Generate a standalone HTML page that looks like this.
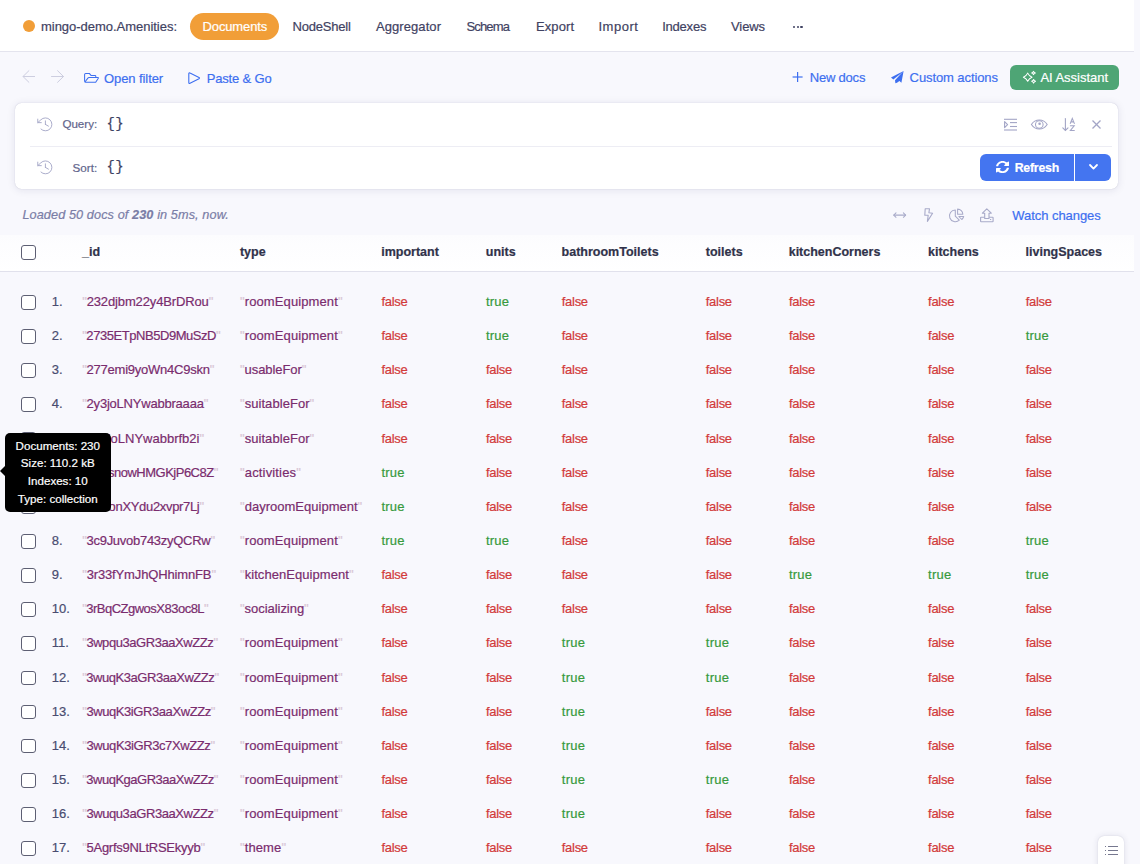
<!DOCTYPE html><html><head><meta charset="utf-8"><style>
*{box-sizing:border-box}
html,body{margin:0;padding:0}
body{width:1140px;height:864px;overflow:hidden;background:#f8f8fd;position:relative;font-family:"Liberation Sans",sans-serif}
.t{position:absolute;line-height:20px;white-space:nowrap;-webkit-text-stroke:0.2px currentColor}
.a{position:absolute}
svg{position:absolute;overflow:visible}
</style></head><body>
<div class="a" style="left:0;top:0;width:1134px;height:52px;background:#fff;border-bottom:1px solid #e4e4ee"></div>
<div class="a" style="left:22.7px;top:20px;width:12px;height:12px;border-radius:50%;background:#f19e38"></div>
<div class="t" style="left:41.00px;top:17px;font-size:13px;color:#3f4262;font-weight:normal;font-style:normal;letter-spacing:-0.028px;">mingo-demo.Amenities:</div>
<div class="a" style="left:190px;top:13px;width:89px;height:27px;border-radius:14px;background:#f19e38"></div>
<div class="t" style="left:202.60px;top:17px;font-size:13px;color:#fff;font-weight:normal;font-style:normal;letter-spacing:-0.144px;">Documents</div>
<div class="t" style="left:292.50px;top:17px;font-size:13px;color:#3f4262;font-weight:normal;font-style:normal;letter-spacing:-0.211px;">NodeShell</div>
<div class="t" style="left:376.00px;top:17px;font-size:13px;color:#3f4262;font-weight:normal;font-style:normal;letter-spacing:0.075px;">Aggregator</div>
<div class="t" style="left:466.40px;top:17px;font-size:13px;color:#3f4262;font-weight:normal;font-style:normal;letter-spacing:-0.818px;">Schema</div>
<div class="t" style="left:536.00px;top:17px;font-size:13px;color:#3f4262;font-weight:normal;font-style:normal;letter-spacing:0.085px;">Export</div>
<div class="t" style="left:598.40px;top:17px;font-size:13px;color:#3f4262;font-weight:normal;font-style:normal;letter-spacing:0.531px;">Import</div>
<div class="t" style="left:662.20px;top:17px;font-size:13px;color:#3f4262;font-weight:normal;font-style:normal;letter-spacing:-0.222px;">Indexes</div>
<div class="t" style="left:731.00px;top:17px;font-size:13px;color:#3f4262;font-weight:normal;font-style:normal;letter-spacing:-0.086px;">Views</div>
<div class="a" style="left:793.0px;top:25.6px;width:2.2px;height:2.2px;border-radius:50%;background:#3f4262"></div>
<div class="a" style="left:796.7px;top:25.6px;width:2.2px;height:2.2px;border-radius:50%;background:#3f4262"></div>
<div class="a" style="left:800.4px;top:25.6px;width:2.2px;height:2.2px;border-radius:50%;background:#3f4262"></div>
<div class="t" style="left:104.00px;top:69px;font-size:13px;color:#3d6ff0;font-weight:normal;font-style:normal;letter-spacing:-0.077px;">Open filter</div>
<div class="t" style="left:206.70px;top:69px;font-size:13px;color:#3d6ff0;font-weight:normal;font-style:normal;letter-spacing:-0.164px;">Paste &amp; Go</div>
<div class="t" style="left:809.80px;top:68px;font-size:13px;color:#3d6ff0;font-weight:normal;font-style:normal;letter-spacing:-0.211px;">New docs</div>
<div class="t" style="left:909.60px;top:68px;font-size:13px;color:#3d6ff0;font-weight:normal;font-style:normal;letter-spacing:-0.092px;">Custom actions</div>
<div class="a" style="left:1010.3px;top:65.2px;width:109px;height:24.6px;border-radius:6px;background:#4ea575"></div>
<div class="t" style="left:1040.40px;top:68px;font-size:13px;color:#fff;font-weight:normal;font-style:normal;letter-spacing:-0.029px;">AI Assistant</div>
<div class="a" style="left:14.8px;top:103.4px;width:1103.6px;height:85.2px;border-radius:6.5px;background:#fff;box-shadow:0 0 1px rgba(30,30,90,0.25),0 1px 8px rgba(30,30,90,0.10)"></div>
<div class="a" style="left:30px;top:145.7px;width:1082px;height:1px;background:#ededf4"></div>
<svg style="left:35.7px;top:114.8px" width="18.8" height="18.8" viewBox="0 0 256 256"><g fill="none" stroke="#a3a5c6" stroke-width="12.5" stroke-linecap="round" stroke-linejoin="round"><line x1="128" y1="80" x2="128" y2="128"/><line x1="169.6" y1="152" x2="128" y2="128"/><polyline points="72 104 24 104 24 56"/><path d="M67.6,192a88,88,0,1,0-1.8-126.2L24,104"/></g></svg>
<svg style="left:35.7px;top:157.8px" width="18.8" height="18.8" viewBox="0 0 256 256"><g fill="none" stroke="#a3a5c6" stroke-width="12.5" stroke-linecap="round" stroke-linejoin="round"><line x1="128" y1="80" x2="128" y2="128"/><line x1="169.6" y1="152" x2="128" y2="128"/><polyline points="72 104 24 104 24 56"/><path d="M67.6,192a88,88,0,1,0-1.8-126.2L24,104"/></g></svg>
<div class="t" style="left:62.40px;top:114px;font-size:11.6px;color:#62658c;font-weight:normal;font-style:normal;">Query:</div>
<div class="t" style="left:72.60px;top:158px;font-size:11.65px;color:#62658c;font-weight:normal;font-style:normal;">Sort:</div>
<div class="t" style="left:106.60px;top:114px;font-size:14px;color:#3c3f62;font-weight:normal;font-style:normal;font-family:Liberation Mono,monospace;letter-spacing:0.3px">{}</div>
<div class="t" style="left:106.60px;top:157px;font-size:14px;color:#3c3f62;font-weight:normal;font-style:normal;font-family:Liberation Mono,monospace;letter-spacing:0.3px">{}</div>
<svg style="left:1004px;top:118px" width="13" height="13" viewBox="0 0 13 13"><g stroke="#a3a5c6" stroke-width="1.1" fill="none"><line x1="0" y1="1.3" x2="13" y2="1.3"/><line x1="6" y1="4.6" x2="13" y2="4.6"/><line x1="6" y1="8.5" x2="13" y2="8.5"/><line x1="0" y1="12" x2="13" y2="12"/><path d="M0.6,3.6 L3.6,6.6 L0.6,9.6Z" stroke-linejoin="round"/></g></svg>
<svg style="left:1062px;top:118px" width="14" height="13" viewBox="0 0 14 13"><g stroke="#a3a5c6" stroke-width="1.1" fill="none" stroke-linecap="round"><line x1="3.4" y1="0.5" x2="3.4" y2="12.3"/><polyline points="0.8,9.8 3.4,12.4 6,9.8"/><path d="M8.3,5.4 L10.3,0.4 L12.3,5.4 M9,3.9 L11.6,3.9"/><path d="M8.4,7.8 L12.2,7.8 L8.4,12.5 L12.3,12.5"/></g></svg>
<svg style="left:1092.1px;top:120px" width="9" height="9" viewBox="0 0 9 9"><g stroke="#a3a5c6" stroke-width="1.2"><line x1="0.5" y1="0.5" x2="8.5" y2="8.5"/><line x1="8.5" y1="0.5" x2="0.5" y2="8.5"/></g></svg>
<div class="a" style="left:980px;top:154px;width:131px;height:27.3px;border-radius:6px;background:#4475f0"></div>
<div class="a" style="left:1074px;top:154px;width:1px;height:27.3px;background:#fff"></div>
<div class="t" style="left:1014.70px;top:158px;font-size:12.3px;color:#fff;font-weight:bold;font-style:normal;letter-spacing:-0.217px;">Refresh</div>
<svg style="left:1088.8px;top:164px" width="9" height="6" viewBox="0 0 9 6"><polyline points="1,1 4.5,4.6 8,1" fill="none" stroke="#fff" stroke-width="1.8" stroke-linecap="round" stroke-linejoin="round"/></svg>
<div class="t" style="left:22.40px;top:205px;font-size:12.7px;color:#7a7da6;font-weight:normal;font-style:italic;letter-spacing:0.096px;">Loaded 50 docs of <b>230</b> in 5ms, now.</div>
<svg style="left:924px;top:208px" width="10" height="14" viewBox="0 0 10 14"><path d="M1.2,0.7 L5.5,0.7 L4.9,4.8 L8.6,5.3 L3.4,13.4 L4.2,7.3 L0.8,7.2 Z" fill="none" stroke="#a8aac9" stroke-width="1.1" stroke-linejoin="round"/></svg>
<svg style="left:979.5px;top:208px" width="14" height="14.5" viewBox="0 0 14 14.5"><g fill="none" stroke="#a8aac9" stroke-width="1.1" stroke-linejoin="round"><path d="M6.8,0.8 L11.3,5.2 L9,5.2 L9,10.5 L4.7,10.5 L4.7,5.2 L2.4,5.2 Z"/><path d="M4.6,9.2 L1.2,9.2 Q0.6,9.2 0.6,9.8 L0.6,13.2 Q0.6,13.8 1.2,13.8 L12.5,13.8 Q13.1,13.8 13.1,13.2 L13.1,9.8 Q13.1,9.2 12.5,9.2 L9.1,9.2"/><line x1="10" y1="11.5" x2="11.2" y2="11.5"/></g></svg>
<div class="t" style="left:1012.30px;top:206px;font-size:13px;color:#3d6ff0;font-weight:normal;font-style:normal;letter-spacing:-0.052px;">Watch changes</div>
<div class="a" style="left:0;top:235px;width:1134px;height:37px;background:linear-gradient(#fcfcfe,#fff);border-bottom:1px solid #e1e1ec"></div>
<div class="a" style="left:21.30px;top:245.00px;width:14.6px;height:14.6px;border:1.3px solid #5d5f73;border-radius:3px;background:#fff"></div>
<div class="t" style="left:82.00px;top:242px;font-size:12.5px;color:#30324a;font-weight:bold;font-style:normal;">_id</div>
<div class="t" style="left:239.90px;top:242px;font-size:12.5px;color:#30324a;font-weight:bold;font-style:normal;">type</div>
<div class="t" style="left:381.20px;top:242px;font-size:12.5px;color:#30324a;font-weight:bold;font-style:normal;">important</div>
<div class="t" style="left:485.80px;top:242px;font-size:12.5px;color:#30324a;font-weight:bold;font-style:normal;">units</div>
<div class="t" style="left:561.60px;top:242px;font-size:12.5px;color:#30324a;font-weight:bold;font-style:normal;">bathroomToilets</div>
<div class="t" style="left:705.80px;top:242px;font-size:12.5px;color:#30324a;font-weight:bold;font-style:normal;">toilets</div>
<div class="t" style="left:788.70px;top:242px;font-size:12.5px;color:#30324a;font-weight:bold;font-style:normal;">kitchenCorners</div>
<div class="t" style="left:928.00px;top:242px;font-size:12.5px;color:#30324a;font-weight:bold;font-style:normal;">kitchens</div>
<div class="t" style="left:1025.60px;top:242px;font-size:12.5px;color:#30324a;font-weight:bold;font-style:normal;">livingSpaces</div>
<div class="a" style="left:21.30px;top:295.00px;width:14.6px;height:14.6px;border:1.3px solid #5d5f73;border-radius:3px;background:#fff"></div>
<div class="t" style="left:51.80px;top:292px;font-size:13px;color:#494c70;font-weight:normal;font-style:normal;">1.</div>
<div class="t" style="left:82.20px;top:292px;font-size:13px;color:#7a2c6e;font-weight:normal;font-style:normal;letter-spacing:-0.135px;"><span style="color:#d8c6d6">"</span>232djbm22y4BrDRou<span style="color:#d8c6d6">"</span></div>
<div class="t" style="left:240.00px;top:292px;font-size:13px;color:#7a2c6e;font-weight:normal;font-style:normal;letter-spacing:0.107px;"><span style="color:#d8c6d6">"</span>roomEquipment<span style="color:#d8c6d6">"</span></div>
<div class="t" style="left:381.40px;top:292px;font-size:13px;color:#d23a3a;font-weight:normal;font-style:normal;letter-spacing:-0.290px;">false</div>
<div class="t" style="left:485.90px;top:292px;font-size:13px;color:#379a3d;font-weight:normal;font-style:normal;letter-spacing:0.233px;">true</div>
<div class="t" style="left:561.80px;top:292px;font-size:13px;color:#d23a3a;font-weight:normal;font-style:normal;letter-spacing:-0.290px;">false</div>
<div class="t" style="left:705.80px;top:292px;font-size:13px;color:#d23a3a;font-weight:normal;font-style:normal;letter-spacing:-0.290px;">false</div>
<div class="t" style="left:788.90px;top:292px;font-size:13px;color:#d23a3a;font-weight:normal;font-style:normal;letter-spacing:-0.290px;">false</div>
<div class="t" style="left:928.10px;top:292px;font-size:13px;color:#d23a3a;font-weight:normal;font-style:normal;letter-spacing:-0.290px;">false</div>
<div class="t" style="left:1025.70px;top:292px;font-size:13px;color:#d23a3a;font-weight:normal;font-style:normal;letter-spacing:-0.290px;">false</div>
<div class="a" style="left:21.30px;top:329.14px;width:14.6px;height:14.6px;border:1.3px solid #5d5f73;border-radius:3px;background:#fff"></div>
<div class="t" style="left:51.80px;top:326px;font-size:13px;color:#494c70;font-weight:normal;font-style:normal;">2.</div>
<div class="t" style="left:82.20px;top:326px;font-size:13px;color:#7a2c6e;font-weight:normal;font-style:normal;letter-spacing:-0.446px;"><span style="color:#d8c6d6">"</span>2735ETpNB5D9MuSzD<span style="color:#d8c6d6">"</span></div>
<div class="t" style="left:240.00px;top:326px;font-size:13px;color:#7a2c6e;font-weight:normal;font-style:normal;letter-spacing:0.107px;"><span style="color:#d8c6d6">"</span>roomEquipment<span style="color:#d8c6d6">"</span></div>
<div class="t" style="left:381.40px;top:326px;font-size:13px;color:#d23a3a;font-weight:normal;font-style:normal;letter-spacing:-0.290px;">false</div>
<div class="t" style="left:485.90px;top:326px;font-size:13px;color:#379a3d;font-weight:normal;font-style:normal;letter-spacing:0.233px;">true</div>
<div class="t" style="left:561.80px;top:326px;font-size:13px;color:#d23a3a;font-weight:normal;font-style:normal;letter-spacing:-0.290px;">false</div>
<div class="t" style="left:705.80px;top:326px;font-size:13px;color:#d23a3a;font-weight:normal;font-style:normal;letter-spacing:-0.290px;">false</div>
<div class="t" style="left:788.90px;top:326px;font-size:13px;color:#d23a3a;font-weight:normal;font-style:normal;letter-spacing:-0.290px;">false</div>
<div class="t" style="left:928.10px;top:326px;font-size:13px;color:#d23a3a;font-weight:normal;font-style:normal;letter-spacing:-0.290px;">false</div>
<div class="t" style="left:1025.70px;top:326px;font-size:13px;color:#379a3d;font-weight:normal;font-style:normal;letter-spacing:0.233px;">true</div>
<div class="a" style="left:21.30px;top:363.28px;width:14.6px;height:14.6px;border:1.3px solid #5d5f73;border-radius:3px;background:#fff"></div>
<div class="t" style="left:51.80px;top:360px;font-size:13px;color:#494c70;font-weight:normal;font-style:normal;">3.</div>
<div class="t" style="left:82.20px;top:360px;font-size:13px;color:#7a2c6e;font-weight:normal;font-style:normal;letter-spacing:-0.239px;"><span style="color:#d8c6d6">"</span>277emi9yoWn4C9skn<span style="color:#d8c6d6">"</span></div>
<div class="t" style="left:240.00px;top:360px;font-size:13px;color:#7a2c6e;font-weight:normal;font-style:normal;letter-spacing:-0.074px;"><span style="color:#d8c6d6">"</span>usableFor<span style="color:#d8c6d6">"</span></div>
<div class="t" style="left:381.40px;top:360px;font-size:13px;color:#d23a3a;font-weight:normal;font-style:normal;letter-spacing:-0.290px;">false</div>
<div class="t" style="left:485.90px;top:360px;font-size:13px;color:#d23a3a;font-weight:normal;font-style:normal;letter-spacing:-0.290px;">false</div>
<div class="t" style="left:561.80px;top:360px;font-size:13px;color:#d23a3a;font-weight:normal;font-style:normal;letter-spacing:-0.290px;">false</div>
<div class="t" style="left:705.80px;top:360px;font-size:13px;color:#d23a3a;font-weight:normal;font-style:normal;letter-spacing:-0.290px;">false</div>
<div class="t" style="left:788.90px;top:360px;font-size:13px;color:#d23a3a;font-weight:normal;font-style:normal;letter-spacing:-0.290px;">false</div>
<div class="t" style="left:928.10px;top:360px;font-size:13px;color:#d23a3a;font-weight:normal;font-style:normal;letter-spacing:-0.290px;">false</div>
<div class="t" style="left:1025.70px;top:360px;font-size:13px;color:#d23a3a;font-weight:normal;font-style:normal;letter-spacing:-0.290px;">false</div>
<div class="a" style="left:21.30px;top:397.42px;width:14.6px;height:14.6px;border:1.3px solid #5d5f73;border-radius:3px;background:#fff"></div>
<div class="t" style="left:51.80px;top:394px;font-size:13px;color:#494c70;font-weight:normal;font-style:normal;">4.</div>
<div class="t" style="left:82.20px;top:394px;font-size:13px;color:#7a2c6e;font-weight:normal;font-style:normal;letter-spacing:-0.213px;"><span style="color:#d8c6d6">"</span>2y3joLNYwabbraaaa<span style="color:#d8c6d6">"</span></div>
<div class="t" style="left:240.00px;top:394px;font-size:13px;color:#7a2c6e;font-weight:normal;font-style:normal;letter-spacing:0.055px;"><span style="color:#d8c6d6">"</span>suitableFor<span style="color:#d8c6d6">"</span></div>
<div class="t" style="left:381.40px;top:394px;font-size:13px;color:#d23a3a;font-weight:normal;font-style:normal;letter-spacing:-0.290px;">false</div>
<div class="t" style="left:485.90px;top:394px;font-size:13px;color:#d23a3a;font-weight:normal;font-style:normal;letter-spacing:-0.290px;">false</div>
<div class="t" style="left:561.80px;top:394px;font-size:13px;color:#d23a3a;font-weight:normal;font-style:normal;letter-spacing:-0.290px;">false</div>
<div class="t" style="left:705.80px;top:394px;font-size:13px;color:#d23a3a;font-weight:normal;font-style:normal;letter-spacing:-0.290px;">false</div>
<div class="t" style="left:788.90px;top:394px;font-size:13px;color:#d23a3a;font-weight:normal;font-style:normal;letter-spacing:-0.290px;">false</div>
<div class="t" style="left:928.10px;top:394px;font-size:13px;color:#d23a3a;font-weight:normal;font-style:normal;letter-spacing:-0.290px;">false</div>
<div class="t" style="left:1025.70px;top:394px;font-size:13px;color:#d23a3a;font-weight:normal;font-style:normal;letter-spacing:-0.290px;">false</div>
<div class="a" style="left:21.30px;top:431.56px;width:14.6px;height:14.6px;border:1.3px solid #5d5f73;border-radius:3px;background:#fff"></div>
<div class="t" style="left:51.80px;top:429px;font-size:13px;color:#494c70;font-weight:normal;font-style:normal;">5.</div>
<div class="t" style="left:82.20px;top:429px;font-size:13px;color:#7a2c6e;font-weight:normal;font-style:normal;letter-spacing:-0.009px;"><span style="color:#d8c6d6">"</span>2y3joLNYwabbrfb2i<span style="color:#d8c6d6">"</span></div>
<div class="t" style="left:240.00px;top:429px;font-size:13px;color:#7a2c6e;font-weight:normal;font-style:normal;letter-spacing:0.055px;"><span style="color:#d8c6d6">"</span>suitableFor<span style="color:#d8c6d6">"</span></div>
<div class="t" style="left:381.40px;top:429px;font-size:13px;color:#d23a3a;font-weight:normal;font-style:normal;letter-spacing:-0.290px;">false</div>
<div class="t" style="left:485.90px;top:429px;font-size:13px;color:#d23a3a;font-weight:normal;font-style:normal;letter-spacing:-0.290px;">false</div>
<div class="t" style="left:561.80px;top:429px;font-size:13px;color:#d23a3a;font-weight:normal;font-style:normal;letter-spacing:-0.290px;">false</div>
<div class="t" style="left:705.80px;top:429px;font-size:13px;color:#d23a3a;font-weight:normal;font-style:normal;letter-spacing:-0.290px;">false</div>
<div class="t" style="left:788.90px;top:429px;font-size:13px;color:#d23a3a;font-weight:normal;font-style:normal;letter-spacing:-0.290px;">false</div>
<div class="t" style="left:928.10px;top:429px;font-size:13px;color:#d23a3a;font-weight:normal;font-style:normal;letter-spacing:-0.290px;">false</div>
<div class="t" style="left:1025.70px;top:429px;font-size:13px;color:#d23a3a;font-weight:normal;font-style:normal;letter-spacing:-0.290px;">false</div>
<div class="a" style="left:21.30px;top:465.70px;width:14.6px;height:14.6px;border:1.3px solid #5d5f73;border-radius:3px;background:#fff"></div>
<div class="t" style="left:51.80px;top:463px;font-size:13px;color:#494c70;font-weight:normal;font-style:normal;">6.</div>
<div class="t" style="left:82.20px;top:463px;font-size:13px;color:#7a2c6e;font-weight:normal;font-style:normal;letter-spacing:-0.498px;"><span style="color:#d8c6d6">"</span>33BsnowHMGKjP6C8Z<span style="color:#d8c6d6">"</span></div>
<div class="t" style="left:240.00px;top:463px;font-size:13px;color:#7a2c6e;font-weight:normal;font-style:normal;letter-spacing:0.156px;"><span style="color:#d8c6d6">"</span>activities<span style="color:#d8c6d6">"</span></div>
<div class="t" style="left:381.40px;top:463px;font-size:13px;color:#379a3d;font-weight:normal;font-style:normal;letter-spacing:0.233px;">true</div>
<div class="t" style="left:485.90px;top:463px;font-size:13px;color:#d23a3a;font-weight:normal;font-style:normal;letter-spacing:-0.290px;">false</div>
<div class="t" style="left:561.80px;top:463px;font-size:13px;color:#d23a3a;font-weight:normal;font-style:normal;letter-spacing:-0.290px;">false</div>
<div class="t" style="left:705.80px;top:463px;font-size:13px;color:#d23a3a;font-weight:normal;font-style:normal;letter-spacing:-0.290px;">false</div>
<div class="t" style="left:788.90px;top:463px;font-size:13px;color:#d23a3a;font-weight:normal;font-style:normal;letter-spacing:-0.290px;">false</div>
<div class="t" style="left:928.10px;top:463px;font-size:13px;color:#d23a3a;font-weight:normal;font-style:normal;letter-spacing:-0.290px;">false</div>
<div class="t" style="left:1025.70px;top:463px;font-size:13px;color:#d23a3a;font-weight:normal;font-style:normal;letter-spacing:-0.290px;">false</div>
<div class="a" style="left:21.30px;top:499.84px;width:14.6px;height:14.6px;border:1.3px solid #5d5f73;border-radius:3px;background:#fff"></div>
<div class="t" style="left:51.80px;top:497px;font-size:13px;color:#494c70;font-weight:normal;font-style:normal;">7.</div>
<div class="t" style="left:82.20px;top:497px;font-size:13px;color:#7a2c6e;font-weight:normal;font-style:normal;letter-spacing:-0.331px;"><span style="color:#d8c6d6">"</span>3EaonXYdu2xvpr7Lj<span style="color:#d8c6d6">"</span></div>
<div class="t" style="left:240.00px;top:497px;font-size:13px;color:#7a2c6e;font-weight:normal;font-style:normal;letter-spacing:0.014px;"><span style="color:#d8c6d6">"</span>dayroomEquipment<span style="color:#d8c6d6">"</span></div>
<div class="t" style="left:381.40px;top:497px;font-size:13px;color:#379a3d;font-weight:normal;font-style:normal;letter-spacing:0.233px;">true</div>
<div class="t" style="left:485.90px;top:497px;font-size:13px;color:#d23a3a;font-weight:normal;font-style:normal;letter-spacing:-0.290px;">false</div>
<div class="t" style="left:561.80px;top:497px;font-size:13px;color:#d23a3a;font-weight:normal;font-style:normal;letter-spacing:-0.290px;">false</div>
<div class="t" style="left:705.80px;top:497px;font-size:13px;color:#d23a3a;font-weight:normal;font-style:normal;letter-spacing:-0.290px;">false</div>
<div class="t" style="left:788.90px;top:497px;font-size:13px;color:#d23a3a;font-weight:normal;font-style:normal;letter-spacing:-0.290px;">false</div>
<div class="t" style="left:928.10px;top:497px;font-size:13px;color:#d23a3a;font-weight:normal;font-style:normal;letter-spacing:-0.290px;">false</div>
<div class="t" style="left:1025.70px;top:497px;font-size:13px;color:#d23a3a;font-weight:normal;font-style:normal;letter-spacing:-0.290px;">false</div>
<div class="a" style="left:21.30px;top:533.98px;width:14.6px;height:14.6px;border:1.3px solid #5d5f73;border-radius:3px;background:#fff"></div>
<div class="t" style="left:51.80px;top:531px;font-size:13px;color:#494c70;font-weight:normal;font-style:normal;">8.</div>
<div class="t" style="left:82.20px;top:531px;font-size:13px;color:#7a2c6e;font-weight:normal;font-style:normal;letter-spacing:-0.280px;"><span style="color:#d8c6d6">"</span>3c9Juvob743zyQCRw<span style="color:#d8c6d6">"</span></div>
<div class="t" style="left:240.00px;top:531px;font-size:13px;color:#7a2c6e;font-weight:normal;font-style:normal;letter-spacing:0.107px;"><span style="color:#d8c6d6">"</span>roomEquipment<span style="color:#d8c6d6">"</span></div>
<div class="t" style="left:381.40px;top:531px;font-size:13px;color:#379a3d;font-weight:normal;font-style:normal;letter-spacing:0.233px;">true</div>
<div class="t" style="left:485.90px;top:531px;font-size:13px;color:#379a3d;font-weight:normal;font-style:normal;letter-spacing:0.233px;">true</div>
<div class="t" style="left:561.80px;top:531px;font-size:13px;color:#d23a3a;font-weight:normal;font-style:normal;letter-spacing:-0.290px;">false</div>
<div class="t" style="left:705.80px;top:531px;font-size:13px;color:#d23a3a;font-weight:normal;font-style:normal;letter-spacing:-0.290px;">false</div>
<div class="t" style="left:788.90px;top:531px;font-size:13px;color:#d23a3a;font-weight:normal;font-style:normal;letter-spacing:-0.290px;">false</div>
<div class="t" style="left:928.10px;top:531px;font-size:13px;color:#d23a3a;font-weight:normal;font-style:normal;letter-spacing:-0.290px;">false</div>
<div class="t" style="left:1025.70px;top:531px;font-size:13px;color:#379a3d;font-weight:normal;font-style:normal;letter-spacing:0.233px;">true</div>
<div class="a" style="left:21.30px;top:568.12px;width:14.6px;height:14.6px;border:1.3px solid #5d5f73;border-radius:3px;background:#fff"></div>
<div class="t" style="left:51.80px;top:565px;font-size:13px;color:#494c70;font-weight:normal;font-style:normal;">9.</div>
<div class="t" style="left:82.20px;top:565px;font-size:13px;color:#7a2c6e;font-weight:normal;font-style:normal;letter-spacing:-0.144px;"><span style="color:#d8c6d6">"</span>3r33fYmJhQHhimnFB<span style="color:#d8c6d6">"</span></div>
<div class="t" style="left:240.00px;top:565px;font-size:13px;color:#7a2c6e;font-weight:normal;font-style:normal;letter-spacing:0.055px;"><span style="color:#d8c6d6">"</span>kitchenEquipment<span style="color:#d8c6d6">"</span></div>
<div class="t" style="left:381.40px;top:565px;font-size:13px;color:#d23a3a;font-weight:normal;font-style:normal;letter-spacing:-0.290px;">false</div>
<div class="t" style="left:485.90px;top:565px;font-size:13px;color:#d23a3a;font-weight:normal;font-style:normal;letter-spacing:-0.290px;">false</div>
<div class="t" style="left:561.80px;top:565px;font-size:13px;color:#d23a3a;font-weight:normal;font-style:normal;letter-spacing:-0.290px;">false</div>
<div class="t" style="left:705.80px;top:565px;font-size:13px;color:#d23a3a;font-weight:normal;font-style:normal;letter-spacing:-0.290px;">false</div>
<div class="t" style="left:788.90px;top:565px;font-size:13px;color:#379a3d;font-weight:normal;font-style:normal;letter-spacing:0.233px;">true</div>
<div class="t" style="left:928.10px;top:565px;font-size:13px;color:#379a3d;font-weight:normal;font-style:normal;letter-spacing:0.233px;">true</div>
<div class="t" style="left:1025.70px;top:565px;font-size:13px;color:#379a3d;font-weight:normal;font-style:normal;letter-spacing:0.233px;">true</div>
<div class="a" style="left:21.30px;top:602.26px;width:14.6px;height:14.6px;border:1.3px solid #5d5f73;border-radius:3px;background:#fff"></div>
<div class="t" style="left:51.80px;top:599px;font-size:13px;color:#494c70;font-weight:normal;font-style:normal;">10.</div>
<div class="t" style="left:82.20px;top:599px;font-size:13px;color:#7a2c6e;font-weight:normal;font-style:normal;letter-spacing:-0.511px;"><span style="color:#d8c6d6">"</span>3rBqCZgwosX83oc8L<span style="color:#d8c6d6">"</span></div>
<div class="t" style="left:240.00px;top:599px;font-size:13px;color:#7a2c6e;font-weight:normal;font-style:normal;letter-spacing:-0.042px;"><span style="color:#d8c6d6">"</span>socializing<span style="color:#d8c6d6">"</span></div>
<div class="t" style="left:381.40px;top:599px;font-size:13px;color:#d23a3a;font-weight:normal;font-style:normal;letter-spacing:-0.290px;">false</div>
<div class="t" style="left:485.90px;top:599px;font-size:13px;color:#d23a3a;font-weight:normal;font-style:normal;letter-spacing:-0.290px;">false</div>
<div class="t" style="left:561.80px;top:599px;font-size:13px;color:#d23a3a;font-weight:normal;font-style:normal;letter-spacing:-0.290px;">false</div>
<div class="t" style="left:705.80px;top:599px;font-size:13px;color:#d23a3a;font-weight:normal;font-style:normal;letter-spacing:-0.290px;">false</div>
<div class="t" style="left:788.90px;top:599px;font-size:13px;color:#d23a3a;font-weight:normal;font-style:normal;letter-spacing:-0.290px;">false</div>
<div class="t" style="left:928.10px;top:599px;font-size:13px;color:#d23a3a;font-weight:normal;font-style:normal;letter-spacing:-0.290px;">false</div>
<div class="t" style="left:1025.70px;top:599px;font-size:13px;color:#d23a3a;font-weight:normal;font-style:normal;letter-spacing:-0.290px;">false</div>
<div class="a" style="left:21.30px;top:636.40px;width:14.6px;height:14.6px;border:1.3px solid #5d5f73;border-radius:3px;background:#fff"></div>
<div class="t" style="left:51.80px;top:633px;font-size:13px;color:#494c70;font-weight:normal;font-style:normal;">11.</div>
<div class="t" style="left:82.20px;top:633px;font-size:13px;color:#7a2c6e;font-weight:normal;font-style:normal;letter-spacing:-0.435px;"><span style="color:#d8c6d6">"</span>3wpqu3aGR3aaXwZZz<span style="color:#d8c6d6">"</span></div>
<div class="t" style="left:240.00px;top:633px;font-size:13px;color:#7a2c6e;font-weight:normal;font-style:normal;letter-spacing:0.107px;"><span style="color:#d8c6d6">"</span>roomEquipment<span style="color:#d8c6d6">"</span></div>
<div class="t" style="left:381.40px;top:633px;font-size:13px;color:#d23a3a;font-weight:normal;font-style:normal;letter-spacing:-0.290px;">false</div>
<div class="t" style="left:485.90px;top:633px;font-size:13px;color:#d23a3a;font-weight:normal;font-style:normal;letter-spacing:-0.290px;">false</div>
<div class="t" style="left:561.80px;top:633px;font-size:13px;color:#379a3d;font-weight:normal;font-style:normal;letter-spacing:0.233px;">true</div>
<div class="t" style="left:705.80px;top:633px;font-size:13px;color:#379a3d;font-weight:normal;font-style:normal;letter-spacing:0.233px;">true</div>
<div class="t" style="left:788.90px;top:633px;font-size:13px;color:#d23a3a;font-weight:normal;font-style:normal;letter-spacing:-0.290px;">false</div>
<div class="t" style="left:928.10px;top:633px;font-size:13px;color:#d23a3a;font-weight:normal;font-style:normal;letter-spacing:-0.290px;">false</div>
<div class="t" style="left:1025.70px;top:633px;font-size:13px;color:#d23a3a;font-weight:normal;font-style:normal;letter-spacing:-0.290px;">false</div>
<div class="a" style="left:21.30px;top:670.54px;width:14.6px;height:14.6px;border:1.3px solid #5d5f73;border-radius:3px;background:#fff"></div>
<div class="t" style="left:51.80px;top:668px;font-size:13px;color:#494c70;font-weight:normal;font-style:normal;">12.</div>
<div class="t" style="left:82.20px;top:668px;font-size:13px;color:#7a2c6e;font-weight:normal;font-style:normal;letter-spacing:-0.460px;"><span style="color:#d8c6d6">"</span>3wuqK3aGR3aaXwZZz<span style="color:#d8c6d6">"</span></div>
<div class="t" style="left:240.00px;top:668px;font-size:13px;color:#7a2c6e;font-weight:normal;font-style:normal;letter-spacing:0.107px;"><span style="color:#d8c6d6">"</span>roomEquipment<span style="color:#d8c6d6">"</span></div>
<div class="t" style="left:381.40px;top:668px;font-size:13px;color:#d23a3a;font-weight:normal;font-style:normal;letter-spacing:-0.290px;">false</div>
<div class="t" style="left:485.90px;top:668px;font-size:13px;color:#d23a3a;font-weight:normal;font-style:normal;letter-spacing:-0.290px;">false</div>
<div class="t" style="left:561.80px;top:668px;font-size:13px;color:#379a3d;font-weight:normal;font-style:normal;letter-spacing:0.233px;">true</div>
<div class="t" style="left:705.80px;top:668px;font-size:13px;color:#379a3d;font-weight:normal;font-style:normal;letter-spacing:0.233px;">true</div>
<div class="t" style="left:788.90px;top:668px;font-size:13px;color:#d23a3a;font-weight:normal;font-style:normal;letter-spacing:-0.290px;">false</div>
<div class="t" style="left:928.10px;top:668px;font-size:13px;color:#d23a3a;font-weight:normal;font-style:normal;letter-spacing:-0.290px;">false</div>
<div class="t" style="left:1025.70px;top:668px;font-size:13px;color:#d23a3a;font-weight:normal;font-style:normal;letter-spacing:-0.290px;">false</div>
<div class="a" style="left:21.30px;top:704.68px;width:14.6px;height:14.6px;border:1.3px solid #5d5f73;border-radius:3px;background:#fff"></div>
<div class="t" style="left:51.80px;top:702px;font-size:13px;color:#494c70;font-weight:normal;font-style:normal;">13.</div>
<div class="t" style="left:82.20px;top:702px;font-size:13px;color:#7a2c6e;font-weight:normal;font-style:normal;letter-spacing:-0.418px;"><span style="color:#d8c6d6">"</span>3wuqK3iGR3aaXwZZz<span style="color:#d8c6d6">"</span></div>
<div class="t" style="left:240.00px;top:702px;font-size:13px;color:#7a2c6e;font-weight:normal;font-style:normal;letter-spacing:0.107px;"><span style="color:#d8c6d6">"</span>roomEquipment<span style="color:#d8c6d6">"</span></div>
<div class="t" style="left:381.40px;top:702px;font-size:13px;color:#d23a3a;font-weight:normal;font-style:normal;letter-spacing:-0.290px;">false</div>
<div class="t" style="left:485.90px;top:702px;font-size:13px;color:#d23a3a;font-weight:normal;font-style:normal;letter-spacing:-0.290px;">false</div>
<div class="t" style="left:561.80px;top:702px;font-size:13px;color:#379a3d;font-weight:normal;font-style:normal;letter-spacing:0.233px;">true</div>
<div class="t" style="left:705.80px;top:702px;font-size:13px;color:#d23a3a;font-weight:normal;font-style:normal;letter-spacing:-0.290px;">false</div>
<div class="t" style="left:788.90px;top:702px;font-size:13px;color:#d23a3a;font-weight:normal;font-style:normal;letter-spacing:-0.290px;">false</div>
<div class="t" style="left:928.10px;top:702px;font-size:13px;color:#d23a3a;font-weight:normal;font-style:normal;letter-spacing:-0.290px;">false</div>
<div class="t" style="left:1025.70px;top:702px;font-size:13px;color:#d23a3a;font-weight:normal;font-style:normal;letter-spacing:-0.290px;">false</div>
<div class="a" style="left:21.30px;top:738.82px;width:14.6px;height:14.6px;border:1.3px solid #5d5f73;border-radius:3px;background:#fff"></div>
<div class="t" style="left:51.80px;top:736px;font-size:13px;color:#494c70;font-weight:normal;font-style:normal;">14.</div>
<div class="t" style="left:82.20px;top:736px;font-size:13px;color:#7a2c6e;font-weight:normal;font-style:normal;letter-spacing:-0.400px;"><span style="color:#d8c6d6">"</span>3wuqK3iGR3c7XwZZz<span style="color:#d8c6d6">"</span></div>
<div class="t" style="left:240.00px;top:736px;font-size:13px;color:#7a2c6e;font-weight:normal;font-style:normal;letter-spacing:0.107px;"><span style="color:#d8c6d6">"</span>roomEquipment<span style="color:#d8c6d6">"</span></div>
<div class="t" style="left:381.40px;top:736px;font-size:13px;color:#d23a3a;font-weight:normal;font-style:normal;letter-spacing:-0.290px;">false</div>
<div class="t" style="left:485.90px;top:736px;font-size:13px;color:#d23a3a;font-weight:normal;font-style:normal;letter-spacing:-0.290px;">false</div>
<div class="t" style="left:561.80px;top:736px;font-size:13px;color:#379a3d;font-weight:normal;font-style:normal;letter-spacing:0.233px;">true</div>
<div class="t" style="left:705.80px;top:736px;font-size:13px;color:#d23a3a;font-weight:normal;font-style:normal;letter-spacing:-0.290px;">false</div>
<div class="t" style="left:788.90px;top:736px;font-size:13px;color:#d23a3a;font-weight:normal;font-style:normal;letter-spacing:-0.290px;">false</div>
<div class="t" style="left:928.10px;top:736px;font-size:13px;color:#d23a3a;font-weight:normal;font-style:normal;letter-spacing:-0.290px;">false</div>
<div class="t" style="left:1025.70px;top:736px;font-size:13px;color:#d23a3a;font-weight:normal;font-style:normal;letter-spacing:-0.290px;">false</div>
<div class="a" style="left:21.30px;top:772.96px;width:14.6px;height:14.6px;border:1.3px solid #5d5f73;border-radius:3px;background:#fff"></div>
<div class="t" style="left:51.80px;top:770px;font-size:13px;color:#494c70;font-weight:normal;font-style:normal;">15.</div>
<div class="t" style="left:82.20px;top:770px;font-size:13px;color:#7a2c6e;font-weight:normal;font-style:normal;letter-spacing:-0.499px;"><span style="color:#d8c6d6">"</span>3wuqKgaGR3aaXwZZz<span style="color:#d8c6d6">"</span></div>
<div class="t" style="left:240.00px;top:770px;font-size:13px;color:#7a2c6e;font-weight:normal;font-style:normal;letter-spacing:0.107px;"><span style="color:#d8c6d6">"</span>roomEquipment<span style="color:#d8c6d6">"</span></div>
<div class="t" style="left:381.40px;top:770px;font-size:13px;color:#d23a3a;font-weight:normal;font-style:normal;letter-spacing:-0.290px;">false</div>
<div class="t" style="left:485.90px;top:770px;font-size:13px;color:#d23a3a;font-weight:normal;font-style:normal;letter-spacing:-0.290px;">false</div>
<div class="t" style="left:561.80px;top:770px;font-size:13px;color:#379a3d;font-weight:normal;font-style:normal;letter-spacing:0.233px;">true</div>
<div class="t" style="left:705.80px;top:770px;font-size:13px;color:#379a3d;font-weight:normal;font-style:normal;letter-spacing:0.233px;">true</div>
<div class="t" style="left:788.90px;top:770px;font-size:13px;color:#d23a3a;font-weight:normal;font-style:normal;letter-spacing:-0.290px;">false</div>
<div class="t" style="left:928.10px;top:770px;font-size:13px;color:#d23a3a;font-weight:normal;font-style:normal;letter-spacing:-0.290px;">false</div>
<div class="t" style="left:1025.70px;top:770px;font-size:13px;color:#d23a3a;font-weight:normal;font-style:normal;letter-spacing:-0.290px;">false</div>
<div class="a" style="left:21.30px;top:807.10px;width:14.6px;height:14.6px;border:1.3px solid #5d5f73;border-radius:3px;background:#fff"></div>
<div class="t" style="left:51.80px;top:804px;font-size:13px;color:#494c70;font-weight:normal;font-style:normal;">16.</div>
<div class="t" style="left:82.20px;top:804px;font-size:13px;color:#7a2c6e;font-weight:normal;font-style:normal;letter-spacing:-0.418px;"><span style="color:#d8c6d6">"</span>3wuqu3aGR3aaXwZZz<span style="color:#d8c6d6">"</span></div>
<div class="t" style="left:240.00px;top:804px;font-size:13px;color:#7a2c6e;font-weight:normal;font-style:normal;letter-spacing:0.107px;"><span style="color:#d8c6d6">"</span>roomEquipment<span style="color:#d8c6d6">"</span></div>
<div class="t" style="left:381.40px;top:804px;font-size:13px;color:#d23a3a;font-weight:normal;font-style:normal;letter-spacing:-0.290px;">false</div>
<div class="t" style="left:485.90px;top:804px;font-size:13px;color:#d23a3a;font-weight:normal;font-style:normal;letter-spacing:-0.290px;">false</div>
<div class="t" style="left:561.80px;top:804px;font-size:13px;color:#379a3d;font-weight:normal;font-style:normal;letter-spacing:0.233px;">true</div>
<div class="t" style="left:705.80px;top:804px;font-size:13px;color:#d23a3a;font-weight:normal;font-style:normal;letter-spacing:-0.290px;">false</div>
<div class="t" style="left:788.90px;top:804px;font-size:13px;color:#d23a3a;font-weight:normal;font-style:normal;letter-spacing:-0.290px;">false</div>
<div class="t" style="left:928.10px;top:804px;font-size:13px;color:#d23a3a;font-weight:normal;font-style:normal;letter-spacing:-0.290px;">false</div>
<div class="t" style="left:1025.70px;top:804px;font-size:13px;color:#d23a3a;font-weight:normal;font-style:normal;letter-spacing:-0.290px;">false</div>
<div class="a" style="left:21.30px;top:841.24px;width:14.6px;height:14.6px;border:1.3px solid #5d5f73;border-radius:3px;background:#fff"></div>
<div class="t" style="left:51.80px;top:838px;font-size:13px;color:#494c70;font-weight:normal;font-style:normal;">17.</div>
<div class="t" style="left:82.20px;top:838px;font-size:13px;color:#7a2c6e;font-weight:normal;font-style:normal;letter-spacing:-0.274px;"><span style="color:#d8c6d6">"</span>5Agrfs9NLtRSEkyyb<span style="color:#d8c6d6">"</span></div>
<div class="t" style="left:240.00px;top:838px;font-size:13px;color:#7a2c6e;font-weight:normal;font-style:normal;letter-spacing:0.106px;"><span style="color:#d8c6d6">"</span>theme<span style="color:#d8c6d6">"</span></div>
<div class="t" style="left:381.40px;top:838px;font-size:13px;color:#d23a3a;font-weight:normal;font-style:normal;letter-spacing:-0.290px;">false</div>
<div class="t" style="left:485.90px;top:838px;font-size:13px;color:#d23a3a;font-weight:normal;font-style:normal;letter-spacing:-0.290px;">false</div>
<div class="t" style="left:561.80px;top:838px;font-size:13px;color:#d23a3a;font-weight:normal;font-style:normal;letter-spacing:-0.290px;">false</div>
<div class="t" style="left:705.80px;top:838px;font-size:13px;color:#d23a3a;font-weight:normal;font-style:normal;letter-spacing:-0.290px;">false</div>
<div class="t" style="left:788.90px;top:838px;font-size:13px;color:#d23a3a;font-weight:normal;font-style:normal;letter-spacing:-0.290px;">false</div>
<div class="t" style="left:928.10px;top:838px;font-size:13px;color:#d23a3a;font-weight:normal;font-style:normal;letter-spacing:-0.290px;">false</div>
<div class="t" style="left:1025.70px;top:838px;font-size:13px;color:#d23a3a;font-weight:normal;font-style:normal;letter-spacing:-0.290px;">false</div>
<svg style="left:0;top:0" width="1140" height="864" viewBox="0 0 1140 864"><g fill="none" stroke="#cdcee0" stroke-width="1" stroke-linecap="round" stroke-linejoin="round"><path d="M34.6,76.5H23 M28.9,70.7 L23,76.5 L28.9,82.3"/><path d="M51.5,76.5H63.5 M57.6,70.7 L63.5,76.5 L57.6,82.3"/></g><g fill="none" stroke="#3d6ff0" stroke-width="1.05" stroke-linecap="round" stroke-linejoin="round"><path d="M84.6,81.2 V74.5 Q84.6,73.4 85.7,73.4 H89.3 L91,75.4 H95 Q95.8,75.4 95.8,76.2 V77.4"/><path d="M85.6,82.2 H95.7 L98.3,78.3 Q98.7,77.4 97.7,77.4 H88.9 Q88.4,77.4 88.1,77.9 L84.9,82.0 Q84.9,82.2 85.6,82.2Z"/></g><path fill="none" stroke="#3d6ff0" stroke-width="1.1" stroke-linejoin="round" d="M188.8,73.8 Q188.8,72.4 190,73.1 L199,77.4 Q200,78.1 199,78.8 L190,83.3 Q188.8,84 188.8,82.6Z"/><g stroke="#3d6ff0" stroke-width="1.2"><line x1="792.6" y1="77" x2="802.6" y2="77"/><line x1="797.6" y1="72" x2="797.6" y2="81.9"/></g><g fill="#3d6ff0"><path d="M903.6,71 L891,77.5 L893.3,79.6 L901.6,73.1Z"/><path d="M903.6,71 L895,80.3 L895.4,83.3 L897,82.8 L899.4,80.9 L901.4,82.7Z"/></g><g fill="none" stroke="#fff" stroke-width="1.05" stroke-linejoin="round"><path d="M1027.7,73.10000000000001 Q1028.99,75.97 1032.0,77.2 Q1028.99,78.43 1027.7,81.3 Q1026.41,78.43 1023.4000000000001,77.2 Q1026.41,75.97 1027.7,73.10000000000001Z"/><path d="M1033.5,71.4 Q1034.04,72.52 1035.3,73 Q1034.04,73.48 1033.5,74.6 Q1032.96,73.48 1031.7,73 Q1032.96,72.52 1033.5,71.4Z"/><path d="M1033.6,79.5 Q1034.17,80.76 1035.5,81.3 Q1034.17,81.84 1033.6,83.1 Q1033.03,81.84 1031.6999999999998,81.3 Q1033.03,80.76 1033.6,79.5Z"/></g><g stroke="#a3a5c6" stroke-width="1.05" fill="none"><path d="M1031.4,124.5 C1035.2,118.6 1043.4,118.6 1047.2,124.5 C1043.4,130.4 1035.2,130.4 1031.4,124.5Z"/><circle cx="1039.3" cy="124.5" r="3.8"/></g><circle cx="1039.6" cy="123.7" r="1.3" fill="#a3a5c6"/><svg x="996" y="160.9" width="13" height="12.2" viewBox="8 8 496 496" preserveAspectRatio="none"><path fill="#fff" d="M370.72 133.28C339.458 104.008 298.888 87.962 255.848 88c-77.458.068-144.328 53.178-162.791 126.85-1.344 5.363-6.122 9.15-11.651 9.15H24.103c-7.498 0-13.194-6.807-11.807-14.176C33.933 94.924 134.813 8 256 8c66.448 0 126.791 26.136 171.315 68.685L463.03 40.97C478.149 25.851 504 36.559 504 57.941V192c0 13.255-10.745 24-24 24H345.941c-21.382 0-32.090-25.851-16.971-40.971l41.75-41.749zM32 296h134.059c21.382 0 32.090 25.851 16.971 40.971l-41.75 41.75c31.262 29.273 71.835 45.319 114.876 45.280 77.418-.07 144.315-53.144 162.787-126.849 1.344-5.363 6.122-9.150 11.651-9.150h57.304c7.498 0 13.194 6.807 11.807 14.176C478.067 417.076 377.187 504 256 504c-66.448 0-126.791-26.136-171.315-68.685L48.970 471.030C33.851 486.149 8 475.441 8 454.059V320c0-13.255 10.745-24 24-24z"/></svg><g fill="none" stroke="#a8aac9" stroke-width="1.05" stroke-linecap="round" stroke-linejoin="round"><line x1="893.8" y1="215.1" x2="905.6" y2="215.1"/><polyline points="896,212.9 893.8,215.1 896,217.3"/><polyline points="903.4,212.9 905.6,215.1 903.4,217.3"/></g><g fill="none" stroke="#a8aac9" stroke-width="1.05" stroke-linejoin="round"><path d="M955.3,209.9 A5.9,5.9 0 1 0 959.3,220.2 L955.3,216.2 Z"/><path d="M957.6,209.1 L957.6,214.3 L962.8,214.3 A5.2,5.2 0 0 0 957.6,209.1Z"/><path d="M958.8,216.5 L963.7,216.5 Q963.2,218.3 961.8,219.5 Z"/></g></svg>
<div class="a" style="left:5px;top:432.5px;width:105.6px;height:79px;border-radius:5px;background:#000"></div>
<div class="a" style="left:0;top:466px;width:0;height:0;border-top:5.2px solid transparent;border-bottom:5.2px solid transparent;border-right:5.5px solid #000"></div>
<div class="t" style="left:5px;width:105.6px;text-align:center;top:436px;font-size:11.6px;color:#fff">Documents: 230</div>
<div class="t" style="left:5px;width:105.6px;text-align:center;top:453px;font-size:11.6px;color:#fff">Size: 110.2 kB</div>
<div class="t" style="left:5px;width:105.6px;text-align:center;top:471px;font-size:11.6px;color:#fff">Indexes: 10</div>
<div class="t" style="left:5px;width:105.6px;text-align:center;top:489px;font-size:11.6px;color:#fff">Type: collection</div>
<div class="a" style="left:1097.6px;top:835.5px;width:26.6px;height:40px;border-radius:6px;background:#fff;box-shadow:0 0 6px rgba(40,40,90,0.12),0 0 1px rgba(40,40,90,0.2)"></div>
<div class="a" style="left:1105.1px;top:845.6px;width:1.1px;height:1.1px;background:#76788f"></div>
<div class="a" style="left:1108.1px;top:845.6px;width:9.7px;height:1.05px;background:#76788f"></div>
<div class="a" style="left:1105.1px;top:849.7px;width:1.1px;height:1.1px;background:#76788f"></div>
<div class="a" style="left:1108.1px;top:849.7px;width:9.7px;height:1.05px;background:#76788f"></div>
<div class="a" style="left:1105.1px;top:853.8px;width:1.1px;height:1.1px;background:#76788f"></div>
<div class="a" style="left:1108.1px;top:853.8px;width:9.7px;height:1.05px;background:#76788f"></div>
</body></html>
